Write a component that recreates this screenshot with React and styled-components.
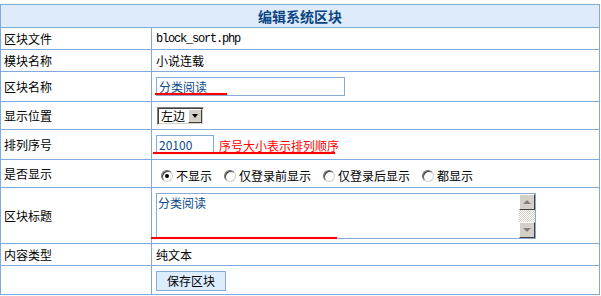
import React from 'react'
import styled, { createGlobalStyle } from 'styled-components'

const GlobalStyle = createGlobalStyle`
  body {
    margin: 4px 0 0 0;
    background: #fff;
    font-family: "Noto Sans CJK SC", "Liberation Sans", sans-serif;
    font-size: 12px;
    color: #000;
  }
`

const FormGrid = styled.div`
  width: 600px;
  box-sizing: border-box;
  display: grid;
  grid-template-columns: 150px 1fr;
  grid-template-rows: 22px 21px 21px 29px 27px 29px 27px 55px 21px 28px;
  gap: 1px;
  padding: 1px;
  background: #80aadc;
`

const Title = styled.div`
  grid-column: 1 / -1;
  background: #deebfb;
  color: #0b4583;
  font-size: 14px;
  font-weight: 700;
  display: flex;
  align-items: center;
  justify-content: center;
`

const Label = styled.div`
  background: #fff;
  display: flex;
  align-items: center;
  padding: 0 3px;
  line-height: 1;
`

const Value = styled.div`
  position: relative;
  background: #fff;
  display: flex;
  align-items: ${p => (p.$top ? 'flex-start' : 'center')};
  padding: ${p => (p.$top ? '5px 4px 0' : '0 4px')};
  line-height: 1;
`

const Mono = styled.span`
  font-family: "Liberation Mono", monospace;
  font-size: 12px;
  letter-spacing: -1.2px;
`

const TextInput = styled.div`
  box-sizing: border-box;
  width: ${p => p.$w}px;
  height: 19px;
  border: 1px solid #87aad8;
  color: #0b4a8c;
  display: flex;
  align-items: center;
  padding-left: 2px;
`

const Hint = styled.span`
  color: #ff0000;
  margin-left: 5px;
  margin-top: 3px;
`

const Select = styled.div`
  box-sizing: border-box;
  width: 47px;
  height: 18px;
  display: flex;
  align-items: stretch;
  border: 1px solid;
  border-color: #808080 #fff #fff #808080;
  box-shadow: inset 1px 1px 0 #404040, inset -1px -1px 0 #d4d0c8;
  padding: 1px;
  margin-left: 1px;
  margin-top: 1px;
`

const SelectText = styled.span`
  flex: 1;
  display: flex;
  align-items: center;
  padding-left: 2px;
`

const ArrowBtn = styled.span`
  width: 14px;
  background: #d4d0c8;
  border: 1px solid;
  border-color: #fff #404040 #404040 #fff;
  box-sizing: border-box;
  display: flex;
  align-items: center;
  justify-content: center;
  &::after {
    content: '';
    border-left: 3px solid transparent;
    border-right: 3px solid transparent;
    border-top: 4px solid #000;
  }
`

const RadioGroup = styled.div`
  display: flex;
  align-items: center;
  margin-top: 4px;
`

const RadioItem = styled.span`
  display: flex;
  align-items: center;
  margin-right: 7px;
`

const RadioDot = styled.span`
  box-sizing: border-box;
  width: 12px;
  height: 12px;
  border-radius: 50%;
  margin: 0 3px 0 5px;
  border: 1px solid;
  border-color: #6e6e6e #d4d0c8 #d4d0c8 #6e6e6e;
  box-shadow: inset 1px 1px 0 #404040;
  background: #fff;
  display: flex;
  align-items: center;
  justify-content: center;
  &::after {
    content: '';
    width: 4px;
    height: 4px;
    border-radius: 50%;
    background: ${p => (p.$checked ? '#000' : 'transparent')};
  }
`

const TextArea = styled.div`
  box-sizing: border-box;
  width: 380px;
  height: 46px;
  border: 1px solid #87aad8;
  display: flex;
`

const AreaText = styled.div`
  flex: 1;
  color: #0b4a8c;
  padding: 3px 1px;
`

const Scrollbar = styled.div`
  width: 16px;
  display: flex;
  flex-direction: column;
  background-color: #eeeeee;
  background-image: repeating-conic-gradient(#d4d0c8 0 25%, #ffffff 0 50%);
  background-size: 2px 2px;
`

const ScrollBtn = styled.div`
  box-sizing: border-box;
  height: 16px;
  background: #d4d0c8;
  border: 1px solid;
  border-color: #fff #404040 #404040 #fff;
  display: flex;
  align-items: center;
  justify-content: center;
  &::after {
    content: '';
    border-left: 4px solid transparent;
    border-right: 4px solid transparent;
    ${p => (p.$up ? 'border-bottom: 4px solid #808080;' : 'border-top: 4px solid #808080;')}
  }
`

const Track = styled.div`
  flex: 1;
`

const Button = styled.div`
  box-sizing: border-box;
  width: 70px;
  height: 20px;
  background: #dcedfd;
  border: 1px solid #87aad8;
  display: flex;
  align-items: center;
  justify-content: center;
  font-size: 12px;
  margin-top: 2px;
`

const Mark = styled.span`
  position: absolute;
  height: 2px;
  background: #ff0000;
  box-shadow: 0 0 1px #ff8080;
  left: ${p => p.$x}px;
  top: ${p => p.$y}px;
  width: ${p => p.$w}px;
`

const rows = [
  { label: '区块文件', value: <Mono>block_sort.php</Mono> },
  { label: '模块名称', value: '小说连载' },
]

export default function App() {
  return (
    <>
      <GlobalStyle />
      <FormGrid>
        <Title>编辑系统区块</Title>

        {rows.map(r => (
          <React.Fragment key={r.label}>
            <Label>{r.label}</Label>
            <Value>{r.value}</Value>
          </React.Fragment>
        ))}

        <Label>区块名称</Label>
        <Value>
          <TextInput $w={189}>分类阅读</TextInput>
          <Mark $x={3} $y={21} $w={72} />
        </Value>

        <Label>显示位置</Label>
        <Value>
          <Select>
            <SelectText>左边</SelectText>
            <ArrowBtn />
          </Select>
        </Value>

        <Label>排列序号</Label>
        <Value>
          <TextInput $w={58}>20100</TextInput>
          <Hint>序号大小表示排列顺序</Hint>
          <Mark $x={1} $y={22} $w={182} />
        </Value>

        <Label>是否显示</Label>
        <Value>
          <RadioGroup>
            <RadioItem><RadioDot $checked />不显示</RadioItem>
            <RadioItem><RadioDot />仅登录前显示</RadioItem>
            <RadioItem><RadioDot />仅登录后显示</RadioItem>
            <RadioItem><RadioDot />都显示</RadioItem>
          </RadioGroup>
        </Value>

        <Label>区块标题</Label>
        <Value $top>
          <TextArea>
            <AreaText>分类阅读</AreaText>
            <Scrollbar>
              <ScrollBtn $up />
              <Track />
              <ScrollBtn />
            </Scrollbar>
          </TextArea>
          <Mark $x={-1} $y={49} $w={186} />
        </Value>

        <Label>内容类型</Label>
        <Value>纯文本</Value>

        <Label />
        <Value>
          <Button>保存区块</Button>
        </Value>
      </FormGrid>
    </>
  )
}
